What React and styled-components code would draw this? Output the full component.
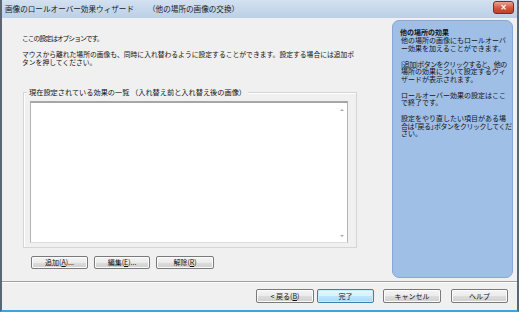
import React from "react";
import styled, { createGlobalStyle } from "styled-components";

const Global = createGlobalStyle`
  html, body { margin: 0; padding: 0; background: #f0f0f0; }
  body { font-family: "Noto Sans CJK JP", "Noto Sans", sans-serif; }
`;

const Window = styled.div`
  width: 519px;
  height: 312px;
  box-sizing: border-box;
  display: flex;
  flex-direction: column;
  overflow: hidden;
  border-left: 2px solid #5b6672;
  border-right: 2px solid #5b6672;
  border-bottom: 2px solid #3aa7dc;
  background: #f0f0f0;
  color: #111;
`;

const TitleBar = styled.div`
  height: 18px;
  flex: none;
  display: flex;
  align-items: center;
  justify-content: space-between;
  padding: 0 3px 0 3px;
  background: linear-gradient(#d3e1f1, #bccfe6);
  font-size: 7.6px;
  line-height: 10px;
  color: #1b1b1b;
  white-space: nowrap;
`;

const TitleSub = styled.span`
  margin-left: 14px;
`;

const Close = styled.div`
  width: 19px;
  height: 11px;
  margin-top: -3px;
  border: 1px solid #7a2e22;
  border-radius: 3px;
  background: linear-gradient(#eaa392, #d0563f 55%, #c13f28);
  display: flex;
  align-items: center;
  justify-content: center;
  color: #fff;
  font-family: "DejaVu Sans", sans-serif;
  font-size: 8px;
  font-weight: bold;
  line-height: 1;
`;

const Body = styled.div`
  flex: 1;
  display: flex;
  flex-direction: column;
`;

const Content = styled.div`
  height: 263px;
  display: flex;
`;

const Main = styled.div`
  flex: 1;
  padding: 16px 0 0 20px;
  font-size: 6.8px;
  line-height: 8px;
  white-space: nowrap;
`;

const Para = styled.p`
  margin: 0 0 8px 0;
  letter-spacing: ${(p) => p.tight || 0}px;
`;

const Group = styled.div`
  position: relative;
  width: 334px;
  height: 156px;
  box-sizing: border-box;
  margin: 26px 0 0 1px;
  padding: 8px 8px 4px 6px;
  border: 1px solid #d5d5d5;
  box-shadow: inset 1px 1px 0 #fff;
`;

const Legend = styled.span`
  position: absolute;
  top: -5px;
  left: 3px;
  padding: 0 2px;
  background: #f0f0f0;
  font-size: 7.2px;
  line-height: 9px;
`;

const ListBox = styled.div`
  height: 100%;
  box-sizing: border-box;
  display: flex;
  justify-content: flex-end;
  background: #fff;
  border: 1px solid #b4b4b4;
  border-top: 2px solid #a6a6a6;
  border-bottom-color: #dcdcdc;
`;

const Scroll = styled.div`
  width: 11px;
  display: flex;
  flex-direction: column;
  align-items: center;
  justify-content: space-between;
  padding: 6px 0 5px;
`;

const Arrow = styled.span`
  width: 0;
  height: 0;
  border-left: 2px solid transparent;
  border-right: 2px solid transparent;
  ${(p) =>
    p.down
      ? "border-top: 2px solid #a8a8a8;"
      : "border-bottom: 2px solid #a8a8a8;"}
`;

const ButtonRow = styled.div`
  display: flex;
  gap: 6px;
  margin: 8px 0 0 9px;
`;

const Button = styled.div`
  width: ${(p) => p.w}px;
  height: ${(p) => p.h || 13}px;
  box-sizing: border-box;
  display: flex;
  align-items: center;
  justify-content: center;
  font-size: 7px;
  line-height: 1;
  border: 1px solid ${(p) => (p.primary ? "#3c7fb1" : "#7a7a7a")};
  border-radius: 2px;
  background: ${(p) =>
    p.primary
      ? "linear-gradient(#eaf6fd 0%, #d9f0fc 50%, #bee6fd 51%, #a7d9f5 100%)"
      : "linear-gradient(#f4f4f4 0%, #ebebeb 50%, #dddddd 51%, #cfcfcf 100%)"};
  box-shadow: inset 0 0 0 1px ${(p) => (p.primary ? "#c9ecfd" : "#fbfbfb")};
  color: #111;
`;

const Panel = styled.div`
  width: 121px;
  box-sizing: border-box;
  margin: 2px 4px 3px 0;
  padding: 7px 1px 0 7px;
  background: #9fbfe7;
  border: 1px solid #86a8d6;
  border-radius: 7px;
  font-size: 7px;
  line-height: 7.5px;
  white-space: nowrap;
  color: #141414;
`;

const PanelTitle = styled.div`
  font-weight: bold;
  font-size: 7px;
  line-height: 8px;
  margin-bottom: 1px;
`;

const PanelPara = styled.p`
  margin: 0 0 8.5px 1px;
`;

const Squeeze = styled.span`
  letter-spacing: ${(p) => p.ls}px;
`;

const OpenBracket = styled.span`
  margin-left: -3px;
`;

const CloseBracket = styled.span`
  margin-right: -3px;
`;

const Separator = styled.div`
  height: 1px;
  background: #a0a0a0;
  box-shadow: 0 1px 0 #fff;
`;

const Footer = styled.div`
  flex: 1;
  display: flex;
  justify-content: flex-end;
  align-items: flex-start;
  padding: 7px 9px 0 0;
`;

const Gap = styled.span`
  width: ${(p) => p.w}px;
`;

export default function App() {
  return (
    <>
      <Global />
      <Window>
        <TitleBar>
          <span>
            画像のロールオーバー効果ウィザード
            <TitleSub>（他の場所の画像の交換）</TitleSub>
          </span>
          <Close>×</Close>
        </TitleBar>
        <Body>
          <Content>
            <Main>
              <Para tight={-1}>ここの設定はオプションです。</Para>
              <Para>
                マウスから離れた場所の画像も、同時に入れ替わるように設定することができます。設定する場合には追加ボ
                <br />
                タンを押してください。
              </Para>
              <Group>
                <Legend>現在設定されている効果の一覧 （入れ替え前と入れ替え後の画像）</Legend>
                <ListBox>
                  <Scroll>
                    <Arrow />
                    <Arrow down />
                  </Scroll>
                </ListBox>
              </Group>
              <ButtonRow>
                <Button w={57}>追加(<u>A</u>)...</Button>
                <Button w={56}>編集(<u>E</u>)...</Button>
                <Button w={58}>解除(<u>R</u>)</Button>
              </ButtonRow>
            </Main>
            <Panel>
              <PanelTitle>他の場所の効果</PanelTitle>
              <PanelPara>
                他の場所の画像にもロールオーバ
                <br />
                ー効果を加えることができます。
              </PanelPara>
              <PanelPara>
                <Squeeze ls={-0.6}>[追加]ボタンをクリックすると、他の</Squeeze>
                <br />
                場所の効果について設定するウィ
                <br />
                ザードが表示されます。
              </PanelPara>
              <PanelPara>
                ロールオーバー効果の設定はここ
                <br />
                で終了です。
              </PanelPara>
              <PanelPara>
                設定をやり直したい項目がある場
                <br />
                <Squeeze ls={-0.5}>
                  合は<OpenBracket>「</OpenBracket>戻る<CloseBracket>」</CloseBracket>ボタンをクリックしてくだ
                </Squeeze>
                <br />
                さい。
              </PanelPara>
            </Panel>
          </Content>
          <Separator />
          <Footer>
            <Button w={58} h={14}>&lt; 戻る(<u>B</u>)</Button>
            <Gap w={3} />
            <Button w={57} h={14} primary>完了</Button>
            <Gap w={9} />
            <Button w={58} h={14}>キャンセル</Button>
            <Gap w={10} />
            <Button w={57} h={14}>ヘルプ</Button>
          </Footer>
        </Body>
      </Window>
    </>
  );
}
